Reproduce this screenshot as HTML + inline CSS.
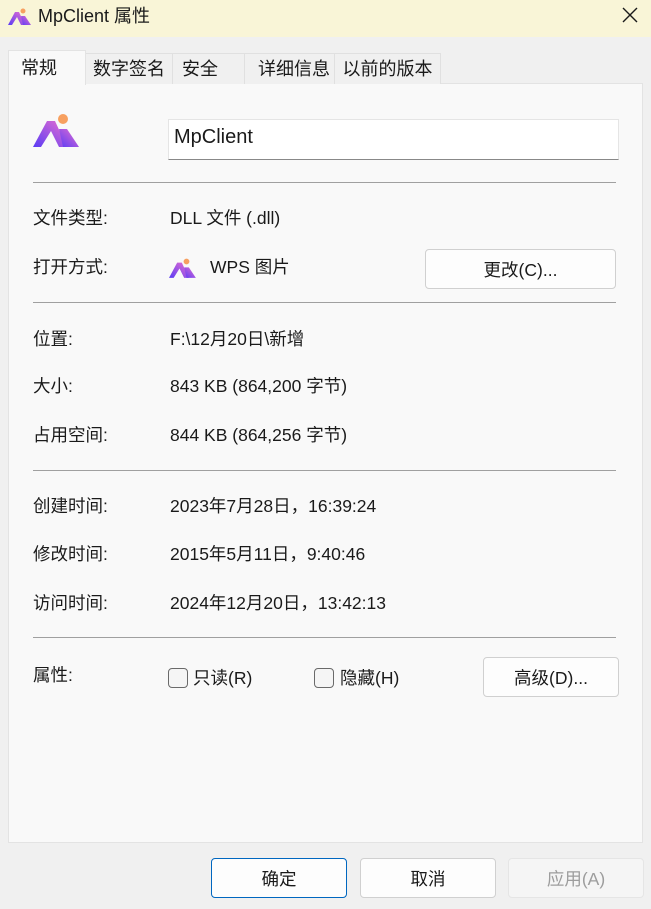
<!DOCTYPE html><html><head><meta charset="utf-8"><style>
*{margin:0;padding:0;box-sizing:border-box}
body{width:651px;height:909px;background:#f0f0f0;font-family:"Liberation Sans","Noto Sans CJK SC",sans-serif;font-size:17.5px;color:#1a1a1a;position:relative;overflow:hidden}
.a{position:absolute;white-space:nowrap;line-height:22px}
.title{left:0;top:0;width:651px;height:37px;background:#f9f5d7}
.tab{position:absolute;top:53px;height:31px;border:1px solid #e0e0e0;border-bottom:none;background:#f0f0f0;font-size:18px;line-height:30px;text-align:center}
.panel{left:8px;top:83px;width:635px;height:760px;background:#f9f9f9;border:1px solid #e3e3e3}
.hr{position:absolute;left:33px;width:583px;height:1px;background:#a0a0a0}
.btn{position:absolute;background:#fdfdfd;border:1px solid #d0d0d0;border-radius:4px;display:flex;align-items:center;justify-content:center;font-size:17.5px}
.cb{position:absolute;width:20px;height:20px;border:1px solid #6a6a6a;border-radius:4px;background:#f5f5f5}
</style></head><body>
<div class="a title"></div>
<svg class="a" style="left:8px;top:8px" width="24" height="18" viewBox="0 0 48 36"><defs><linearGradient id="g" x1="0" y1="1" x2="1" y2="0"><stop offset="0" stop-color="#5a3cf5"/><stop offset="1" stop-color="#e96fd0"/></linearGradient></defs><path d="M0 34 L14 8 L22 8 L34 34 L26 34 L18 18 L8 34Z" fill="url(#g)"/><path d="M26 16 L34 16 L46 34 L30 34Z" fill="url(#g)"/><circle cx="30" cy="6" r="5" fill="#f7a060"/></svg>
<div class="a" style="left:38px;top:5px;font-size:18px">MpClient 属性</div>
<svg class="a" style="left:622px;top:7px" width="16" height="16" viewBox="0 0 16 16"><path d="M1 1L15 15M15 1L1 15" stroke="#1a1a1a" stroke-width="1.4"/></svg>
<div class="a panel"></div>
<div class="tab" style="left:85px;width:88px">数字签名</div>
<div class="tab" style="left:172px;width:73px;text-align:left;padding-left:9px">安全</div>
<div class="tab" style="left:244px;width:91px;text-align:right;padding-right:4px">详细信息</div>
<div class="tab" style="left:334px;width:107px">以前的版本</div>
<div class="tab" style="left:8px;top:50px;width:78px;height:35px;background:#f9f9f9;text-align:left;padding-left:12px;line-height:34px;border-color:#e3e3e3">常规</div>
<svg class="a" style="left:33px;top:113px" width="48" height="36" viewBox="0 0 48 36"><defs><linearGradient id="g2" x1="0" y1="1" x2="1" y2="0"><stop offset="0" stop-color="#5a3cf5"/><stop offset="1" stop-color="#e96fd0"/></linearGradient></defs><path d="M0 34 L14 8 L22 8 L34 34 L26 34 L18 18 L8 34Z" fill="url(#g2)"/><path d="M26 16 L34 16 L46 34 L30 34Z" fill="url(#g2)"/><circle cx="30" cy="6" r="5" fill="#f7a060"/></svg>
<div class="a" style="left:168px;top:119px;width:451px;height:41px;background:#fff;border:1px solid #e5e5e5;border-bottom:1px solid #888;padding:3px 0 0 5px;font-size:20px;line-height:28px">MpClient</div>
<div class="hr" style="top:182px"></div>
<div class="a" style="left:33px;top:207px">文件类型:</div><div class="a" style="left:170px;top:207px">DLL 文件 (.dll)</div>
<div class="a" style="left:33px;top:256px">打开方式:</div>
<svg class="a" style="left:169px;top:258px" width="28" height="21" viewBox="0 0 48 36"><path d="M0 34 L14 8 L22 8 L34 34 L26 34 L18 18 L8 34Z" fill="url(#g2)"/><path d="M26 16 L34 16 L46 34 L30 34Z" fill="url(#g2)"/><circle cx="30" cy="6" r="5" fill="#f7a060"/></svg>
<div class="a" style="left:210px;top:256px">WPS 图片</div>
<div class="btn" style="left:425px;top:249px;width:191px;height:40px">更改(C)...</div>
<div class="hr" style="top:302px"></div>
<div class="a" style="left:33px;top:328px">位置:</div><div class="a" style="left:170px;top:328px">F:\12月20日\新增</div>
<div class="a" style="left:33px;top:375px">大小:</div><div class="a" style="left:170px;top:375px">843 KB (864,200 字节)</div>
<div class="a" style="left:33px;top:424px">占用空间:</div><div class="a" style="left:170px;top:424px">844 KB (864,256 字节)</div>
<div class="hr" style="top:470px"></div>
<div class="a" style="left:33px;top:495px">创建时间:</div><div class="a" style="left:170px;top:495px">2023年7月28日，16:39:24</div>
<div class="a" style="left:33px;top:543px">修改时间:</div><div class="a" style="left:170px;top:543px">2015年5月11日，9:40:46</div>
<div class="a" style="left:33px;top:592px">访问时间:</div><div class="a" style="left:170px;top:592px">2024年12月20日，13:42:13</div>
<div class="hr" style="top:637px"></div>
<div class="a" style="left:33px;top:664px">属性:</div>
<div class="cb" style="left:168px;top:668px"></div><div class="a" style="left:193px;top:667px">只读(R)</div>
<div class="cb" style="left:314px;top:668px"></div><div class="a" style="left:340px;top:667px">隐藏(H)</div>
<div class="btn" style="left:483px;top:657px;width:136px;height:40px">高级(D)...</div>
<div class="btn" style="left:211px;top:858px;width:136px;height:40px;border:1px solid #0067c0">确定</div>
<div class="btn" style="left:360px;top:858px;width:136px;height:40px">取消</div>
<div class="btn" style="left:508px;top:858px;width:136px;height:40px;background:#f5f5f5;border-color:#e5e5e5;color:#9d9d9d">应用(A)</div>
</body></html>
